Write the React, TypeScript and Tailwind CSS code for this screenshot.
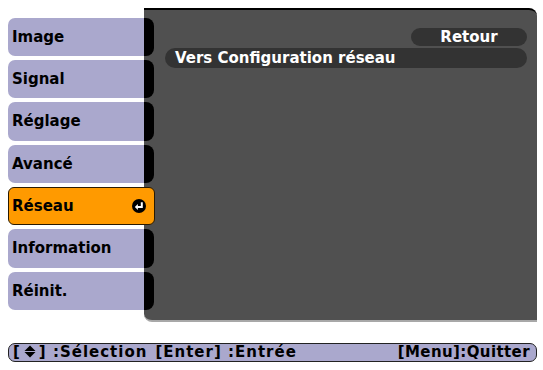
import React from "react";

const TABS = ["Image", "Signal", "Réglage", "Avancé", "Réseau", "Information", "Réinit."];
const ACTIVE = "Réseau";

function EnterIcon() {
  return (
    <svg width="14" height="14" viewBox="0 0 14 14">
      <circle cx="7" cy="7" r="7" fill="#000" />
      <path d="M9.8 3.2 V8 H5.2" stroke="#fff" strokeWidth="2" fill="none" />
      <path d="M2.8 8 L5.9 5 V11 Z" fill="#fff" />
    </svg>
  );
}

function UpDown() {
  return (
    <svg width="12" height="13" viewBox="0 0 12 13" className="inline-block mx-[3px] -mt-[2px] align-middle">
      <path d="M6 0.5 L11.5 6 H0.5 Z" fill="#000" />
      <path d="M6 12.5 L11.5 7 H0.5 Z" fill="#000" />
    </svg>
  );
}

export default function App() {
  return (
    <div
      className="w-[543px] h-[370px] bg-white overflow-hidden text-black"
      style={{ fontFamily: '"DejaVu Sans", sans-serif' }}
    >
      <div className="flex pl-2 pt-2">
        {/* Tabs */}
        <div className="relative z-10 w-[146px] pt-[10px] flex flex-col gap-[4px]">
          {TABS.map((t, i) => {
            const active = t === ACTIVE;
            const h = i % 3 === 2 ? "h-[39px]" : "h-[38px]";
            if (active) {
              return (
                <div
                  key={t}
                  className={`${h} w-[147px] bg-[#ff9a00] border border-[#2a1a00] rounded-[6px] flex items-center justify-between pl-[3px] pr-[8px] text-[15px] font-bold`}
                >
                  <span>{t}</span>
                  <EnterIcon />
                </div>
              );
            }
            return (
              <div key={t} className={`${h} flex`}>
                <div className="flex-1 bg-[#aaa8cd] rounded-l-[7px] flex items-center pl-[4px] text-[15px] font-bold">
                  {t}
                </div>
                <div className="w-[10px] bg-black rounded-r-[8px]" />
              </div>
            );
          })}
        </div>

        {/* Main panel */}
        <div className="ml-[-10px] w-[393px] h-[314px] bg-[#505050] border-t-2 border-black border-b-2 border-b-[#a8a8a8] rounded-tr-[8px] rounded-bl-[8px] pt-[18px] pl-[21px] pr-[10px]">
          <div className="flex justify-end">
            <div className="w-[116px] h-[18px] bg-[#333333] rounded-full flex items-center justify-center text-white text-[15px] font-bold">
              Retour
            </div>
          </div>
          <div className="mt-[2px] h-[20px] bg-[#333333] rounded-full flex items-center pl-[10px] text-white text-[15px] font-bold">
            Vers Configuration réseau
          </div>
        </div>
      </div>

      {/* Bottom help bar */}
      <div className="mt-[21px] ml-2 w-[529px] h-[19px] bg-[#aaa8cd] border border-[#222] rounded-[7px] flex items-center text-[15px] font-bold leading-none pl-[4px] pr-[6px]">
        <span className="whitespace-pre tracking-[1px]">
          [<UpDown />] :Sélection
        </span>
        <span className="ml-[8px] whitespace-pre tracking-[1px]">[Enter] :Entrée</span>
        <span className="ml-auto whitespace-pre tracking-[0.4px]">[Menu]:Quitter</span>
      </div>
    </div>
  );
}
